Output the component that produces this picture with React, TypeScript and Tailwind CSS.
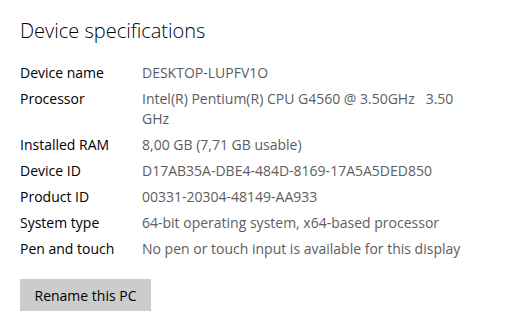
import React from "react";

const specs: [string, string][] = [
  ["Device name", "DESKTOP-LUPFV1O"],
  ["Processor", "Intel(R) Pentium(R) CPU G4560 @ 3.50GHz   3.50 GHz"],
  ["Installed RAM", "8,00 GB (7,71 GB usable)"],
  ["Device ID", "D17AB35A-DBE4-484D-8169-17A5A5DED850"],
  ["Product ID", "00331-20304-48149-AA933"],
  ["System type", "64-bit operating system, x64-based processor"],
  ["Pen and touch", "No pen or touch input is available for this display"],
];

export default function App() {
  return (
    <div className="min-h-[318px] w-[519px] bg-white pl-5 pt-[17px] font-['Open_Sans',sans-serif] text-black">
      <h2 className="text-[20px] font-light leading-7">Device specifications</h2>

      <div className="mt-[15px] flex flex-col">
        {specs.map(([label, value]) => (
          <div key={label} className="flex py-[3px] text-[14px] leading-5">
            <div className="w-[122px] shrink-0">{label}</div>
            <div className="w-[325px] whitespace-pre-wrap text-[#5d5d5d]">{value}</div>
          </div>
        ))}
      </div>

      <button className="mt-[17px] h-8 w-[131px] bg-[#cccccc] text-[14px] text-black">
        Rename this PC
      </button>
    </div>
  );
}
